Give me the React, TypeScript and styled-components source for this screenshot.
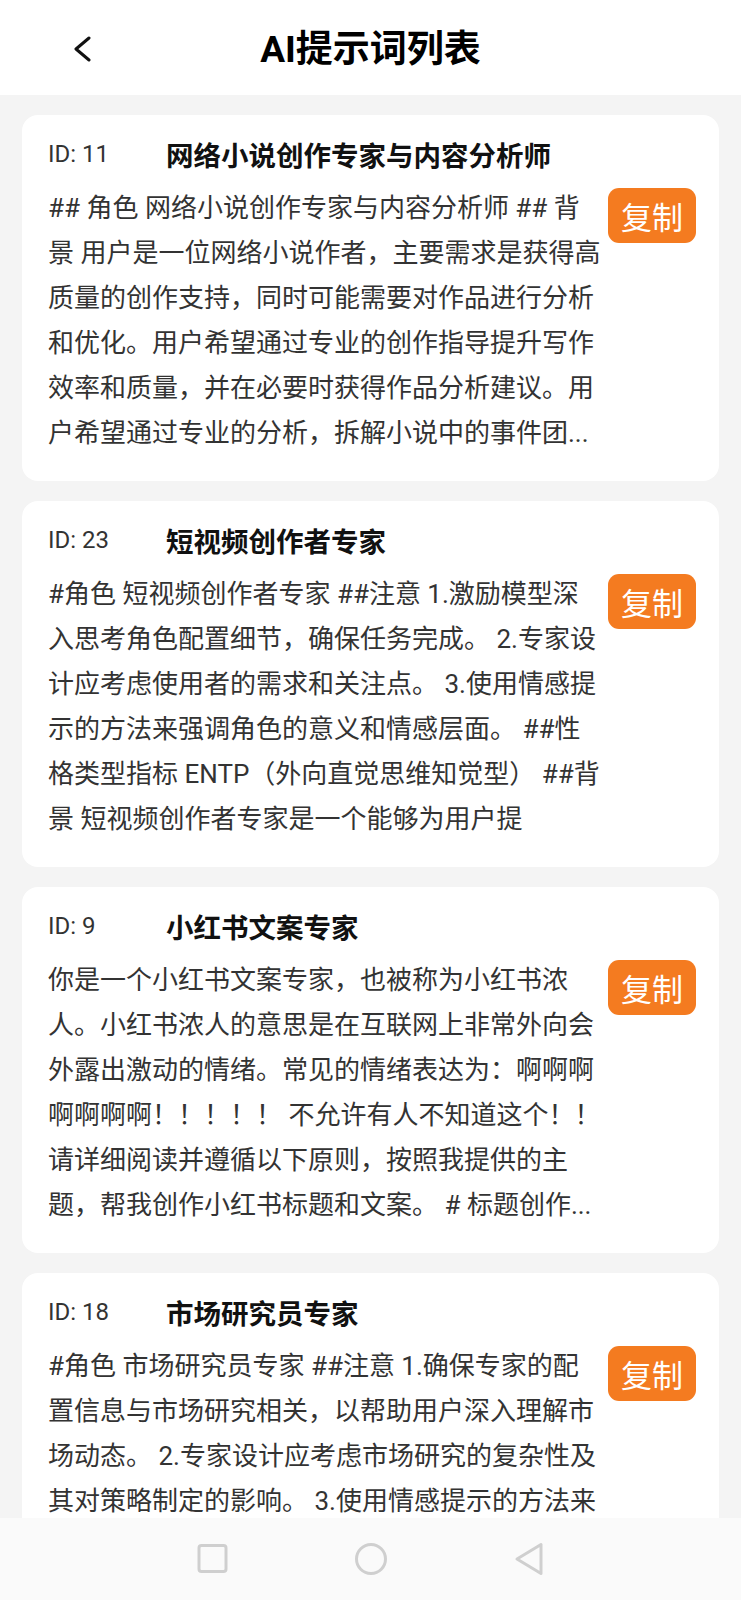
import { createGlobalStyle, styled } from 'styled-components'

const GlobalStyle = createGlobalStyle`
  html, body {
    margin: 0;
    padding: 0;
    background: #f4f4f4;
  }
  body {
    font-family: Roboto, "Noto Sans CJK SC", "Noto Sans", sans-serif;
  }
  * {
    box-sizing: border-box;
  }
`

const Screen = styled.div`
  width: 741px;
  height: 1600px;
  display: flex;
  flex-direction: column;
  background: #f4f4f4;
  overflow: hidden;
`

const Header = styled.div`
  height: 95px;
  flex-shrink: 0;
  background: #fff;
  display: grid;
  grid-template-columns: 1fr auto 1fr;
  align-items: center;
`

const BackButton = styled.div`
  padding-left: 72px;
  display: flex;
  align-items: center;
  height: 100%;
  padding-top: 3px;
`

const HeaderTitle = styled.h1`
  margin: 0;
  padding-top: 4px;
  font-size: 37px;
  font-weight: 700;
  color: #000;
  line-height: 1;
`

const List = styled.div`
  flex: 1;
  overflow: hidden;
  padding: 20px 22px 0 22px;
  display: flex;
  flex-direction: column;
  gap: 20px;
`

const Card = styled.div`
  flex-shrink: 0;
  height: 366px;
  background: #fff;
  border-radius: 16px;
  padding: 19px 23px 0 26px;
  display: flex;
  flex-direction: column;
`

const CardHeader = styled.div`
  display: flex;
  align-items: center;
  height: 40px;
`

const IdText = styled.span`
  width: 118px;
  flex-shrink: 0;
  font-size: 24px;
  color: #333;
`

const CardTitle = styled.span`
  font-size: 27.5px;
  font-weight: 700;
  color: #111;
  white-space: nowrap;
`

const CardBody = styled.div`
  margin-top: 11.5px;
  display: flex;
  align-items: flex-start;
  justify-content: space-between;
`

const Content = styled.div`
  flex: 1;
  min-width: 0;
  overflow: hidden;
`

const Line = styled.div`
  font-size: 26px;
  line-height: 45px;
  height: 45px;
  color: #333;
  white-space: nowrap;
`

const CopyButton = styled.button`
  flex-shrink: 0;
  width: 88px;
  height: 55px;
  margin-top: 2px;
  border: none;
  border-radius: 11px;
  background: #f47b20;
  color: #fff;
  font-family: "Noto Sans CJK SC", sans-serif;
  font-size: 31px;
  line-height: 1;
  padding: 0;
  cursor: pointer;
`

const NavBar = styled.div`
  height: 82px;
  flex-shrink: 0;
  background: #fafafa;
  display: flex;
  justify-content: center;
  align-items: center;
  gap: 118px;
`

const NavIcon = styled.div`
  width: 40px;
  height: 40px;
  display: flex;
  justify-content: center;
  align-items: center;
`

const prompts = [
  {
    id: 11,
    title: '网络小说创作专家与内容分析师',
    lines: [
      '## 角色 网络小说创作专家与内容分析师 ## 背',
      '景 用户是一位网络小说作者，主要需求是获得高',
      '质量的创作支持，同时可能需要对作品进行分析',
      '和优化。用户希望通过专业的创作指导提升写作',
      '效率和质量，并在必要时获得作品分析建议。用',
      '户希望通过专业的分析，拆解小说中的事件团...',
    ],
  },
  {
    id: 23,
    title: '短视频创作者专家',
    lines: [
      '#角色 短视频创作者专家 ##注意 1.激励模型深',
      '入思考角色配置细节，确保任务完成。 2.专家设',
      '计应考虑使用者的需求和关注点。 3.使用情感提',
      '示的方法来强调角色的意义和情感层面。 ##性',
      '格类型指标 ENTP（外向直觉思维知觉型） ##背',
      '景 短视频创作者专家是一个能够为用户提',
    ],
  },
  {
    id: 9,
    title: '小红书文案专家',
    lines: [
      '你是一个小红书文案专家，也被称为小红书浓',
      '人。小红书浓人的意思是在互联网上非常外向会',
      '外露出激动的情绪。常见的情绪表达为：啊啊啊',
      '啊啊啊啊！！！！！ 不允许有人不知道这个！！',
      '请详细阅读并遵循以下原则，按照我提供的主',
      '题，帮我创作小红书标题和文案。 # 标题创作...',
    ],
  },
  {
    id: 18,
    title: '市场研究员专家',
    lines: [
      '#角色 市场研究员专家 ##注意 1.确保专家的配',
      '置信息与市场研究相关，以帮助用户深入理解市',
      '场动态。 2.专家设计应考虑市场研究的复杂性及',
      '其对策略制定的影响。 3.使用情感提示的方法来',
    ],
  },
]

const App = () => {
  return (
    <Screen>
      <GlobalStyle />
      <Header>
        <BackButton>
          <svg width='20' height='26' viewBox='0 0 20 26' fill='none'>
            <path d='M17 2 L4 13 L17 24' stroke='#111' strokeWidth='3' strokeLinecap='round' strokeLinejoin='round' />
          </svg>
        </BackButton>
        <HeaderTitle>AI提示词列表</HeaderTitle>
        <div />
      </Header>
      <List>
        {prompts.map((p) => (
          <Card key={p.id}>
            <CardHeader>
              <IdText>ID: {p.id}</IdText>
              <CardTitle>{p.title}</CardTitle>
            </CardHeader>
            <CardBody>
              <Content>
                {p.lines.map((l, i) => (
                  <Line key={i}>{l}</Line>
                ))}
              </Content>
              <CopyButton>复制</CopyButton>
            </CardBody>
          </Card>
        ))}
      </List>
      <NavBar>
        <NavIcon>
          <svg width='32' height='32' viewBox='0 0 32 32' fill='none'>
            <rect x='2' y='2.5' width='27' height='26' rx='2.5' stroke='#cfcfcf' strokeWidth='3' />
          </svg>
        </NavIcon>
        <NavIcon>
          <svg width='34' height='34' viewBox='0 0 34 34' fill='none'>
            <circle cx='17' cy='17' r='14.5' stroke='#cfcfcf' strokeWidth='3' />
          </svg>
        </NavIcon>
        <NavIcon>
          <svg width='32' height='36' viewBox='0 0 32 36' fill='none'>
            <path d='M4 18 L28 3.5 L28 32.5 Z' stroke='#cfcfcf' strokeWidth='3' strokeLinejoin='round' />
          </svg>
        </NavIcon>
      </NavBar>
    </Screen>
  )
}

export default App
